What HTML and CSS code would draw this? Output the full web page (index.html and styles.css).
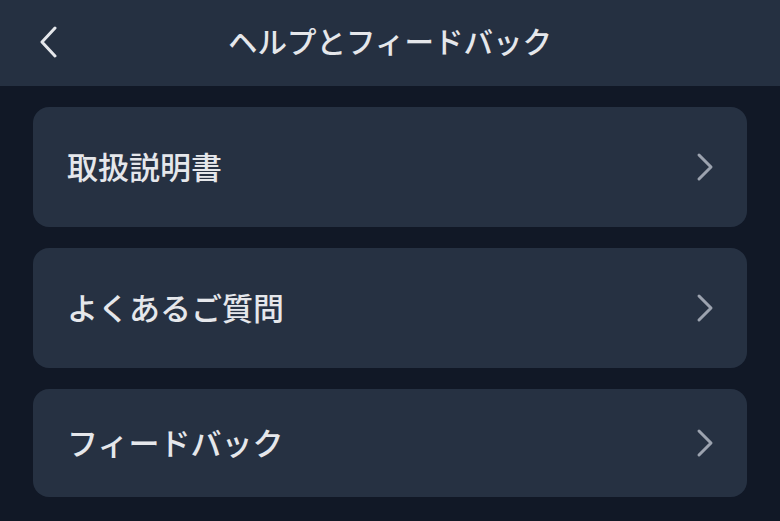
FILE: index.html
```html
<!DOCTYPE html>
<html lang="ja">
<head>
<meta charset="utf-8">
<link rel="stylesheet" href="styles.css">
</head>
<body>
<header class="header">
  <button class="back" aria-label="戻る">
    <svg width="20" height="32" viewBox="0 0 20 32"><path d="M17 2 L4 16 L17 30" fill="none" stroke="#e5e7eb" stroke-width="3" stroke-linecap="round" stroke-linejoin="round"/></svg>
  </button>
  <h1 class="title">ヘルプとフィードバック</h1>
</header>
<main class="list">
  <a class="item tall">
    <span class="label">取扱説明書</span>
    <svg class="chev" width="18" height="30" viewBox="0 0 18 30"><path d="M3 3 L15 15 L3 27" fill="none" stroke="#9ca3af" stroke-width="3" stroke-linecap="round" stroke-linejoin="round"/></svg>
  </a>
  <a class="item tall">
    <span class="label">よくあるご質問</span>
    <svg class="chev" width="18" height="30" viewBox="0 0 18 30"><path d="M3 3 L15 15 L3 27" fill="none" stroke="#9ca3af" stroke-width="3" stroke-linecap="round" stroke-linejoin="round"/></svg>
  </a>
  <a class="item short">
    <span class="label">フィードバック</span>
    <svg class="chev" width="18" height="30" viewBox="0 0 18 30"><path d="M3 3 L15 15 L3 27" fill="none" stroke="#9ca3af" stroke-width="3" stroke-linecap="round" stroke-linejoin="round"/></svg>
  </a>
</main>
</body>
</html>
```
FILE: styles.css
```css
html, body {
  margin: 0;
  padding: 0;
  background: #111826;
  font-family: "Noto Sans CJK JP", "Noto Sans", sans-serif;
  overflow: hidden;
}
.header {
  height: 86px;
  background: #253041;
  display: flex;
  align-items: center;
  justify-content: center;
  position: relative;
}
.back {
  position: absolute;
  left: 36px;
  top: 25px;
  background: none;
  border: 0;
  padding: 0;
  width: 24px;
  height: 34px;
  display: flex;
  align-items: center;
  justify-content: center;
}
.title {
  margin: 0;
  color: #e5e7eb;
  font-size: 29.5px;
  font-weight: 500;
  letter-spacing: 0;
  margin-top: -7px;
}
.list {
  padding: 21px 33px 0 33px;
  display: flex;
  flex-direction: column;
  gap: 21px;
}
.item {
  background: #263142;
  border-radius: 16px;
  display: flex;
  align-items: center;
  justify-content: space-between;
  padding: 0 33px 0 34px;
}
.tall { height: 120px; }
.short { height: 108px; }
.label {
  color: #e5e7eb;
  font-size: 31px;
  font-weight: 500;
  margin-top: -4px;
}
.chev { display: block; }
```
